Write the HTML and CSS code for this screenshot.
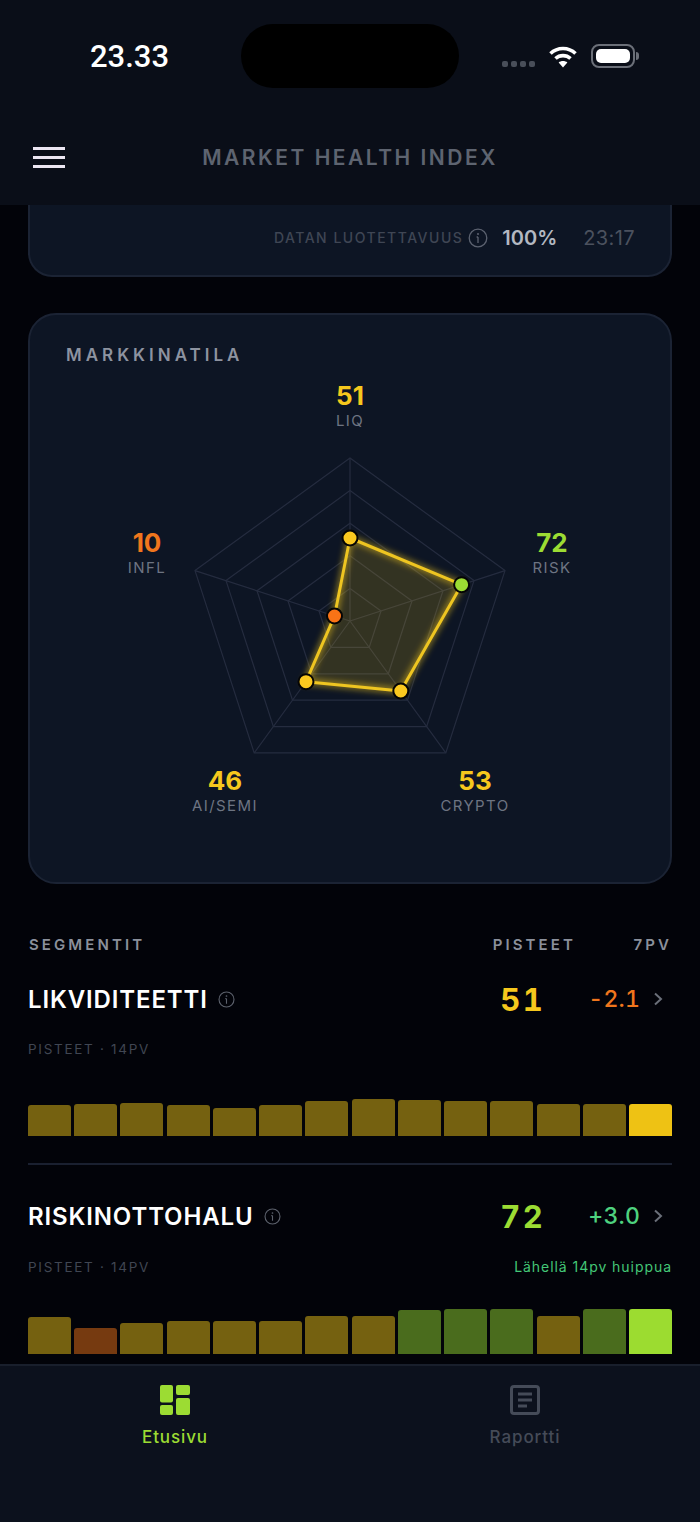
FILE: index.html
```html
<!DOCTYPE html>
<html>
<head>
    <title>Market Health Index</title>
    <link rel="stylesheet" href="styles.css">
</head>
<body>
    <div class="app">
        <header class="top">
            <div class="status-bar">
                <div class="clock">23.33</div>
                <div class="island"></div>
                <div class="status-icons">
                    <div class="signal"><i></i><i></i><i></i><i></i></div>
                    <svg class="wifi" width="30" height="24" viewBox="0 0 30 24">
                        <path class="wifi-arc" d="M2.5 9.5C9.5 2.8 20.5 2.8 27.5 9.5"/>
                        <path class="wifi-arc" d="M7.5 14.5C11.8 10.6 18.2 10.6 22.5 14.5"/>
                        <path class="wifi-dot" d="M15 23.5L10.6 18.6C13 16.6 17 16.6 19.4 18.6Z"/>
                    </svg>
                    <div class="battery"><div class="battery-fill"></div></div>
                    <div class="battery-cap"></div>
                </div>
            </div>
            <div class="nav-bar">
                <div class="burger"><i></i><i></i><i></i></div>
                <div class="title">MARKET HEALTH INDEX</div>
            </div>
        </header>

        <main class="content">
            <section class="card trust-card">
                <span class="trust-label">DATAN LUOTETTAVUUS</span>
                <svg class="info trust-info" viewBox="0 0 20 20">
                    <circle cx="10" cy="10" r="8.8"/>
                    <path d="M10 9v6M8.6 9H10"/>
                    <circle class="info-dot" cx="10" cy="5.9" r="1"/>
                </svg>
                <span class="trust-value">100%</span>
                <span class="trust-time">23:17</span>
            </section>

            <section class="card radar-card">
                <h2 class="radar-title">MARKKINATILA</h2>
                <div class="radar">
                    <svg class="radar-svg" width="644" height="530" viewBox="0 0 644 530">
                        <defs>
                            <filter id="glow" x="-20%" y="-20%" width="140%" height="140%">
                                <feGaussianBlur stdDeviation="3"/>
                            </filter>
                        </defs>
                        <g class="grid-lines">
                            <polygon points="322,112 477,224.6 417.8,406.9 226.2,406.9 167,224.6"/>
                            <polygon points="322,144.6 446,234.6 398.6,380.6 245.4,380.6 198,234.6"/>
                            <polygon points="322,177.2 415,244.8 379.5,354.2 264.5,354.2 229,244.8"/>
                            <polygon points="322,209.8 384,254.9 360.3,327.8 283.7,327.8 260,254.9"/>
                            <polygon points="322,242.4 353,264.9 341.2,301.4 302.8,301.4 291,264.9"/>
                            <path d="M322 275V112M322 275L477 224.6M322 275L417.8 406.9M322 275L226.2 406.9M322 275L167 224.6"/>
                        </g>
                        <polygon class="area-glow" filter="url(#glow)" points="322,192 433.6,238.7 372.8,345 278,335.7 306.5,270"/>
                        <polygon class="area" points="322,192 433.6,238.7 372.8,345 278,335.7 306.5,270"/>
                        <circle class="dot dot-yellow" cx="322" cy="192" r="7.5"/>
                        <circle class="dot dot-green" cx="433.6" cy="238.7" r="7.5"/>
                        <circle class="dot dot-yellow" cx="372.8" cy="345" r="7.5"/>
                        <circle class="dot dot-yellow" cx="278" cy="335.7" r="7.5"/>
                        <circle class="dot dot-orange" cx="306.5" cy="270" r="7.5"/>
                    </svg>
                    <div class="axis axis-liq"><b class="yellow">51</b><span>LIQ</span></div>
                    <div class="axis axis-risk"><b class="green">72</b><span>RISK</span></div>
                    <div class="axis axis-crypto"><b class="yellow">53</b><span>CRYPTO</span></div>
                    <div class="axis axis-ai"><b class="yellow">46</b><span>AI/SEMI</span></div>
                    <div class="axis axis-infl"><b class="orange">10</b><span>INFL</span></div>
                </div>
            </section>

            <div class="seg-head">
                <span class="seg-head-name">SEGMENTIT</span>
                <span class="seg-head-score">PISTEET</span>
                <span class="seg-head-week">7PV</span>
            </div>

            <section class="segment seg-first">
                <div class="seg-row">
                    <span class="seg-name">LIKVIDITEETTI</span>
                    <svg class="info seg-info" viewBox="0 0 20 20">
                        <circle cx="10" cy="10" r="8.8"/>
                        <path d="M10 9v6M8.6 9H10"/>
                        <circle class="info-dot" cx="10" cy="5.9" r="1"/>
                    </svg>
                    <span class="seg-score yellow">51</span>
                    <span class="seg-change orange">-2.1</span>
                    <svg class="chev" width="10" height="16" viewBox="0 0 10 16"><path d="M2 2.5L8 8L2 13.5"/></svg>
                </div>
                <div class="seg-sub"><span>PISTEET · 14PV</span></div>
                <div class="bars">
                    <div class="bar dim-yellow" style="height:31px"></div>
                    <div class="bar dim-yellow" style="height:32px"></div>
                    <div class="bar dim-yellow" style="height:33px"></div>
                    <div class="bar dim-yellow" style="height:31px"></div>
                    <div class="bar dim-yellow" style="height:28px"></div>
                    <div class="bar dim-yellow" style="height:31px"></div>
                    <div class="bar dim-yellow" style="height:35px"></div>
                    <div class="bar dim-yellow" style="height:37px"></div>
                    <div class="bar dim-yellow" style="height:36px"></div>
                    <div class="bar dim-yellow" style="height:35px"></div>
                    <div class="bar dim-yellow" style="height:35px"></div>
                    <div class="bar dim-yellow" style="height:32px"></div>
                    <div class="bar dim-yellow" style="height:32px"></div>
                    <div class="bar full-yellow" style="height:32px"></div>
                </div>
            </section>

            <section class="segment seg-second">
                <div class="seg-row">
                    <span class="seg-name">RISKINOTTOHALU</span>
                    <svg class="info seg-info" viewBox="0 0 20 20">
                        <circle cx="10" cy="10" r="8.8"/>
                        <path d="M10 9v6M8.6 9H10"/>
                        <circle class="info-dot" cx="10" cy="5.9" r="1"/>
                    </svg>
                    <span class="seg-score green">72</span>
                    <span class="seg-change mint">+3.0</span>
                    <svg class="chev" width="10" height="16" viewBox="0 0 10 16"><path d="M2 2.5L8 8L2 13.5"/></svg>
                </div>
                <div class="seg-sub"><span>PISTEET · 14PV</span><span class="seg-note">Lähellä 14pv huippua</span></div>
                <div class="bars">
                    <div class="bar dim-yellow" style="height:37px"></div>
                    <div class="bar dim-orange" style="height:26px"></div>
                    <div class="bar dim-yellow" style="height:31px"></div>
                    <div class="bar dim-yellow" style="height:33px"></div>
                    <div class="bar dim-yellow" style="height:33px"></div>
                    <div class="bar dim-yellow" style="height:33px"></div>
                    <div class="bar dim-yellow" style="height:38px"></div>
                    <div class="bar dim-yellow" style="height:38px"></div>
                    <div class="bar dim-green" style="height:44px"></div>
                    <div class="bar dim-green" style="height:45px"></div>
                    <div class="bar dim-green" style="height:45px"></div>
                    <div class="bar dim-yellow" style="height:38px"></div>
                    <div class="bar dim-green" style="height:45px"></div>
                    <div class="bar full-green" style="height:45px"></div>
                </div>
            </section>
        </main>

        <nav class="tabs">
            <div class="tab tab-active">
                <svg width="30" height="30" viewBox="0 0 30 30">
                    <rect x="0" y="0" width="13" height="17.5" rx="2"/>
                    <rect x="16" y="0" width="14" height="10" rx="2"/>
                    <rect x="0" y="20" width="13" height="10" rx="2"/>
                    <rect x="16" y="13" width="14" height="17" rx="2"/>
                </svg>
                <span>Etusivu</span>
            </div>
            <div class="tab">
                <svg class="tab-doc" width="30" height="30" viewBox="0 0 30 30">
                    <rect x="1.5" y="1.5" width="27" height="27" rx="2.5"/>
                    <path d="M8 9h14M8 15h14M8 21h9"/>
                </svg>
                <span>Raportti</span>
            </div>
        </nav>
    </div>
</body>
</html>
```

FILE: styles.css
```css
* {
    box-sizing: border-box;
}
html, body {
    margin: 0;
    height: 100%;
}
body {
    font-family: Inter, "Noto Sans", sans-serif;
    background-color: #020309;
    color: #fff;
}
.app {
    width: 700px;
    height: 1522px;
    display: flex;
    flex-direction: column;
    overflow: hidden;
}

/* header */
.top {
    height: 205px;
    flex: none;
    background-color: #0a0e18;
}
.status-bar {
    height: 112px;
    padding-top: 24px;
    display: flex;
    align-items: flex-start;
}
.clock {
    width: 241px;
    padding: 16px 0 0 90px;
    font-family: Roboto, sans-serif;
    font-size: 31px;
    line-height: 34px;
    font-weight: 500;
}
.island {
    width: 218px;
    height: 64px;
    border-radius: 32px;
    background-color: #000;
}
.status-icons {
    display: flex;
    align-items: flex-start;
    padding: 20px 0 0 43px;
}
.signal {
    display: flex;
    gap: 3px;
    margin-top: 17px;
}
.signal i {
    width: 6px;
    height: 6px;
    border-radius: 2px;
    background-color: #494e59;
}
.wifi {
    margin: 0 0 0 13px;
}
.wifi-arc {
    fill: none;
    stroke: #fff;
    stroke-width: 3.6;
}
.wifi-dot {
    fill: #fff;
}
.battery {
    width: 44px;
    height: 24px;
    margin-left: 13px;
    padding: 3px;
    border: 2px solid #6b6f78;
    border-radius: 8px;
}
.battery-fill {
    height: 100%;
    border-radius: 5px;
    background-color: #fff;
}
.battery-cap {
    width: 3px;
    height: 8px;
    margin: 8px 0 0 1px;
    border-radius: 0 3px 3px 0;
    background-color: #6b6f78;
}
.nav-bar {
    display: flex;
    align-items: center;
    height: 90px;
}
.burger {
    width: 32px;
    margin-left: 33px;
    display: flex;
    flex-direction: column;
    gap: 6px;
}
.burger i {
    height: 3px;
    background-color: #ece6f2;
}
.title {
    width: 570px;
    text-align: center;
    font-size: 21px;
    font-weight: 600;
    letter-spacing: 2.5px;
    color: #5e6470;
}

/* cards */
.content {
    flex: 1;
    min-height: 0;
    overflow: hidden;
}
.card {
    margin: 0 28px;
    background-color: #0d1524;
    border: 2px solid #1b2334;
}
.trust-card {
    height: 72px;
    padding: 0 35px 5px 0;
    border-top: none;
    border-radius: 0 0 24px 24px;
    display: flex;
    justify-content: flex-end;
    align-items: center;
}
.trust-label {
    font-size: 14px;
    font-weight: 500;
    letter-spacing: 1.5px;
    color: #3f4654;
}
.info {
    fill: none;
    stroke-width: 1.3;
}
.info-dot {
    stroke: none;
}
.trust-info {
    width: 20px;
    height: 20px;
    margin-left: 5px;
    stroke: #5c6270;
}
.trust-info .info-dot {
    fill: #5c6270;
}
.trust-value {
    margin-left: 14px;
    font-size: 20px;
    font-weight: 600;
    color: #b3b8c1;
}
.trust-time {
    margin-left: 26px;
    font-size: 20px;
    letter-spacing: 0.4px;
    color: #4b515e;
}
.radar-card {
    height: 571px;
    margin-top: 36px;
    border-radius: 28px;
}
.radar-title {
    margin: 30px 0 0 36px;
    font-size: 17px;
    line-height: 20px;
    font-weight: 600;
    letter-spacing: 4px;
    color: #8d93a0;
}

/* radar chart */
.radar {
    position: relative;
    width: 640px;
    height: 515px;
    margin-top: 2px;
}
.radar-svg {
    position: absolute;
    left: -2px;
    top: -21px;
}
.grid-lines {
    fill: none;
    stroke: #252c3f;
    stroke-width: 1.2;
}
.area-glow {
    fill: none;
    stroke: #f4c81c;
    stroke-width: 6;
    opacity: 0.55;
}
.area {
    fill: rgba(244, 200, 28, 0.17);
    stroke: #eec521;
    stroke-width: 3;
    stroke-linejoin: round;
}
.dot {
    stroke: #050505;
    stroke-width: 2;
}
.dot-yellow {
    fill: #fbc91f;
}
.dot-green {
    fill: #9cdc33;
}
.dot-orange {
    fill: #f97316;
}
.axis {
    position: absolute;
    width: 120px;
    text-align: center;
}
.axis b {
    display: block;
    font-size: 26px;
    line-height: 31px;
    font-weight: 700;
}
.axis span {
    display: block;
    font-size: 15px;
    line-height: 20px;
    letter-spacing: 1.4px;
    color: #6d7482;
}
.axis-liq {
    left: 260px;
    top: 13px;
}
.axis-risk {
    left: 462px;
    top: 160px;
}
.axis-crypto {
    left: 385px;
    top: 398px;
}
.axis-ai {
    left: 135px;
    top: 398px;
}
.axis-infl {
    left: 57px;
    top: 160px;
}
.yellow {
    color: #f6c81d;
}
.green {
    color: #9cdc33;
}
.orange {
    color: #f0761d;
}
.mint {
    color: #4ed27f;
}

/* segments */
.seg-head {
    display: flex;
    margin: 51px 28px 0 29px;
    font-size: 15px;
    line-height: 20px;
    font-weight: 600;
    letter-spacing: 3.1px;
    color: #8b909b;
}
.seg-head-name {
    flex: 1;
}
.seg-head-week {
    width: 96px;
    text-align: right;
}
.segment {
    margin: 0 28px;
}
.seg-first {
    padding-bottom: 27px;
    border-bottom: 2px solid #1a2030;
}
.seg-row {
    display: flex;
    align-items: center;
    height: 40px;
    margin-top: 24px;
}
.seg-second .seg-row {
    margin-top: 31px;
}
.seg-name {
    font-size: 24px;
    font-weight: 600;
    letter-spacing: 0.87px;
}
.seg-info {
    width: 17px;
    height: 17px;
    margin-left: 10px;
    stroke: #5d626d;
}
.seg-info .info-dot {
    fill: #5d626d;
}
.seg-score {
    width: 42px;
    margin-left: auto;
    margin-right: 46px;
    font-size: 31px;
    font-weight: 700;
    letter-spacing: 2.5px;
    white-space: nowrap;
    font-variant-numeric: tabular-nums;
}
.seg-change {
    font-size: 23px;
    font-weight: 500;
    letter-spacing: 0.2px;
    font-variant-numeric: tabular-nums;
}
.chev {
    margin: 0 9px 0 13px;
    fill: none;
    stroke: #6a6f79;
    stroke-width: 2;
}
.seg-sub {
    display: flex;
    justify-content: space-between;
    margin-top: 21px;
    font-size: 13.5px;
    line-height: 18px;
    letter-spacing: 1.7px;
    color: #404652;
}
.seg-second .seg-sub {
    margin-top: 22px;
}
.seg-note {
    font-size: 14px;
    letter-spacing: 0.95px;
    color: #44c777;
}
.bars {
    display: grid;
    grid-template-columns: repeat(14, 1fr);
    gap: 3.3px;
    align-items: end;
    height: 46px;
    margin-top: 32px;
}
.seg-first .bars {
    height: 37px;
    margin-top: 41px;
}
.bar {
    border-radius: 3px 3px 0 0;
}
.dim-yellow {
    background-color: #756110;
}
.full-yellow {
    background-color: #eec214;
}
.dim-orange {
    background-color: #763a10;
}
.dim-green {
    background-color: #4a6c1d;
}
.full-green {
    background-color: #9cdc30;
}

/* tab bar */
.tabs {
    height: 158px;
    flex: none;
    display: flex;
    background-color: #0c111d;
    border-top: 2px solid #191f2c;
}
.tab {
    flex: 1;
    padding-top: 19px;
    display: flex;
    flex-direction: column;
    align-items: center;
    gap: 11px;
    font-size: 17px;
    line-height: 22px;
    font-weight: 500;
    letter-spacing: 0.9px;
    color: #454b58;
}
.tab-active {
    color: #9cdc33;
}
.tab-active rect {
    fill: #9cdc33;
}
.tab-doc rect, .tab-doc path {
    fill: none;
    stroke: #454b58;
    stroke-width: 3;
}
```
